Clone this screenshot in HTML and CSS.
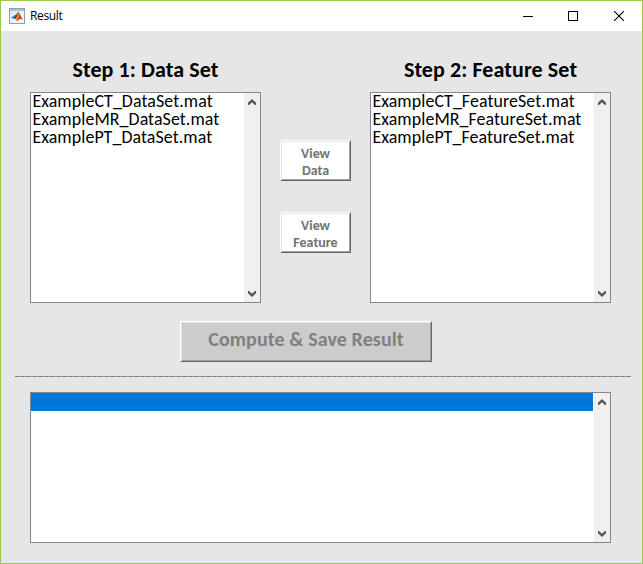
FILE: index.html
```html
<!DOCTYPE html>
<html lang="en">
<head>
<meta charset="utf-8">
<title>Result</title>
<link rel="stylesheet" href="styles.css">
</head>
<body>
<svg width="0" height="0" class="defs">
  <symbol id="up" viewBox="0 0 8 6"><path d="M0 6V3.7L4 0L8 3.7V6H7L4 3.2L1 6Z" fill="#555"/></symbol>
  <symbol id="down" viewBox="0 0 8 6"><path d="M0 0V2.3L4 6L8 2.3V0H7L4 2.8L1 0Z" fill="#555"/></symbol>
</svg>
<div class="window">
  <header class="titlebar">
    <svg class="logo" width="16" height="16" viewBox="0 0 16 16">
      <defs><linearGradient id="bg" x1="0" y1="0" x2="1" y2="1"><stop offset="0" stop-color="#dce9f3"/><stop offset="1" stop-color="#fbfdfe"/></linearGradient></defs>
      <rect x=".5" y=".5" width="15" height="15" fill="url(#bg)" stroke="#8c9db0"/>
      <path d="M1 1H15V3H1Z" fill="#a9c4db"/>
      <path d="M2 9.3L5.2 7.7L7 8.2L6 11L4.5 11Z" fill="#398ebc"/>
      <path d="M5.2 7.7L7.2 6.5L9 3.7L8.5 8L6 11Z" fill="#34506f"/>
      <path d="M9 3.7C10.3 4 11.5 8.8 14 11.8L11.6 10.6L8.2 13.3C7.6 11.5 6.8 10.7 5.7 10.7C7.7 9.5 8.3 5.9 9 3.7Z" fill="#d84b18"/>
      <path d="M9 4.5C10 6.8 10 9 8.2 12.5L7.2 10.6C8.5 9 8.7 6.5 9 4.5Z" fill="#f59b2c"/>
      <path d="M9.8 4.7C11 7 12 9.6 14 11.8L11.7 10.6Z" fill="#98251a"/>
    </svg>
    <span class="caption">Result</span>
    <div class="controls">
      <svg width="10" height="10"><path d="M0 5.5H10" stroke="#000"/></svg>
      <svg width="10" height="10"><rect x=".5" y=".5" width="9" height="9" fill="none" stroke="#000"/></svg>
      <svg class="close" width="10" height="10"><path d="M0 0L10 10M10 0L0 10" stroke="#000" stroke-width="1.1"/></svg>
    </div>
  </header>
  <main>
    <div class="top">
      <section class="data">
        <h2>Step 1: Data Set</h2>
        <div class="listbox">
          <ul><li>ExampleCT_DataSet.mat</li><li>ExampleMR_DataSet.mat</li><li>ExamplePT_DataSet.mat</li></ul>
          <div class="scroll"><svg width="8" height="6"><use href="#up"/></svg><svg width="8" height="6"><use href="#down"/></svg></div>
        </div>
      </section>
      <div class="views">
        <button class="view" disabled>View<br>Data</button>
        <button class="view" disabled>View<br>Feature</button>
      </div>
      <section class="feature">
        <h2>Step 2: Feature Set</h2>
        <div class="listbox">
          <ul><li>ExampleCT_FeatureSet.mat</li><li>ExampleMR_FeatureSet.mat</li><li>ExamplePT_FeatureSet.mat</li></ul>
          <div class="scroll"><svg width="8" height="6"><use href="#up"/></svg><svg width="8" height="6"><use href="#down"/></svg></div>
        </div>
      </section>
    </div>
    <button class="compute" disabled>Compute &amp; Save Result</button>
    <div class="rule"></div>
    <div class="listbox results">
      <ul><li class="selected"></li></ul>
      <div class="scroll"><svg width="8" height="6"><use href="#up"/></svg><svg width="8" height="6"><use href="#down"/></svg></div>
    </div>
  </main>
</div>
</body>
</html>
```
FILE: styles.css
```css
* { box-sizing: border-box; }
body { margin: 0; font-family: Carlito, Lato, "Liberation Sans", sans-serif; color: #000; }
.defs { display: none; }
.window { width: 643px; height: 564px; border: 1px solid #99c94b; background: #e6e6e6; overflow: hidden; }
.titlebar { height: 30px; background: #fff; display: flex; align-items: center; padding: 0 18px 0 8px; }
.logo { margin-top: -1px; }
.caption { font: 12px "Open Sans", sans-serif; letter-spacing: -.35px; margin: -1px 0 0 5px; }
.controls { margin-left: auto; margin-top: -1px; display: flex; gap: 35px; }
.close { margin-left: 1px; }
main { padding: 26px 0 0 29px; display: flex; flex-direction: column; align-items: flex-start; }
.top { display: flex; align-items: flex-start; }
.data { width: 231px; }
.feature { width: 241px; }
h2 { margin: 0; height: 35px; font-size: 22px; line-height: 26px; letter-spacing: .1px; text-align: center; white-space: nowrap; }
.listbox { height: 211px; border: 1px solid #828790; background: #fff; display: flex; }
.listbox ul { flex: 1; min-width: 0; margin: 0; padding: 0; list-style: none; }
.listbox li { height: 18px; line-height: 16px; padding-left: 1.4px; font-size: 17.9px; letter-spacing: .08px; white-space: nowrap; }
.scroll { width: 16px; background: #f0f0f0; display: flex; flex-direction: column; justify-content: space-between; align-items: flex-start; padding: 6px 0 5px 3.5px; }
.views { width: 109px; padding: 83px 0 0 19px; display: flex; flex-direction: column; gap: 31px; }
button { font-family: inherit; font-weight: bold; padding: 0; border: 1px solid; border-color: #fff #696969 #696969 #fff; }
.view { width: 71px; height: 41px; background: #fff; box-shadow: inset 1px 1px #e3e3e3, inset -1px -1px #a0a0a0; color: #737373; font-size: 14px; line-height: 17px; padding-top: 2px; }
.compute { width: 252px; height: 41px; margin: 18px 0 0 150px; background: #ccc; box-shadow: inset 1px 1px #e3e3e3, inset -1px -1px #a0a0a0; color: #808080; font-size: 20px; letter-spacing: .1px; line-height: 24px; padding-bottom: 5px; }
.rule { width: 616px; height: 1px; margin: 14px 0 15px -15px; background: repeating-linear-gradient(90deg, #84796d 0 3px, #7e9eba 3px 6px); }
.results { width: 581px; height: 151px; }
.listbox .selected { background: #0078d7; width: 562px; }
```
